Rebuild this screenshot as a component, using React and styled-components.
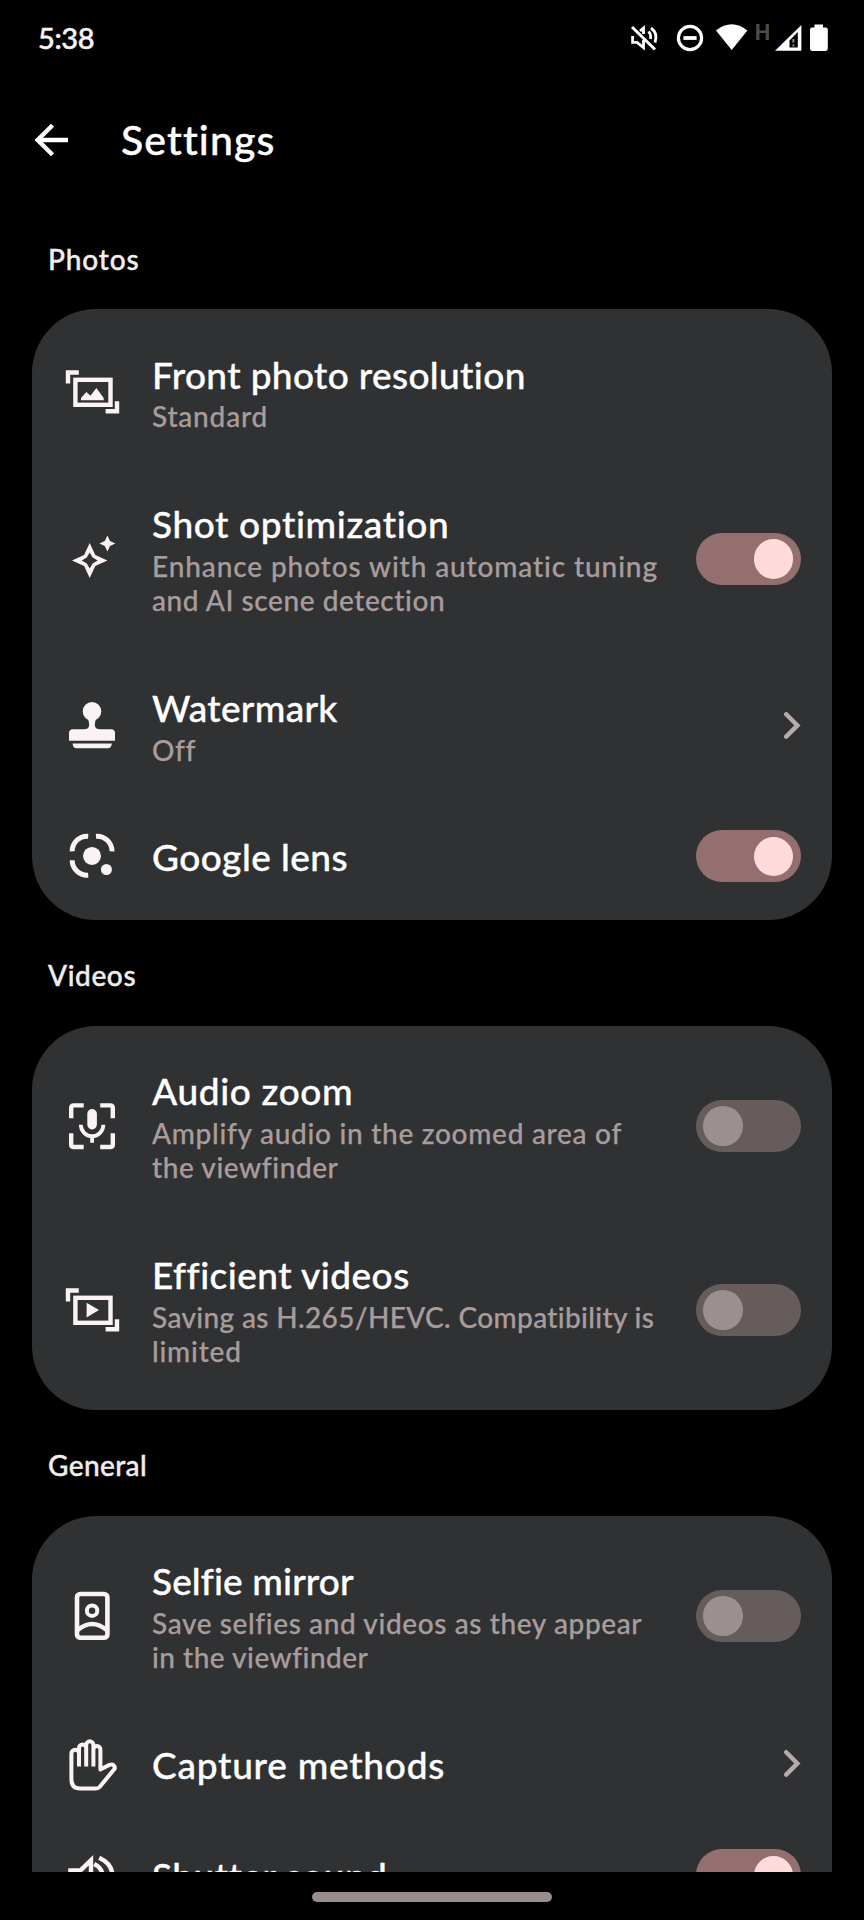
import React from 'react';
import styled, { createGlobalStyle } from 'styled-components';

const GlobalStyle = createGlobalStyle`
  * { box-sizing: border-box; }
  html, body { margin: 0; background: #000; }
  body {
    font-family: Lato, "Open Sans", sans-serif;
    font-variant-ligatures: none;
    color: #fff;
    overflow: hidden;
  }
`;

const Screen = styled.div`
  width: 864px;
  height: 1920px;
  display: flex;
  flex-direction: column;
  background: #000;
  overflow: hidden;
`;

const StatusBar = styled.header`
  flex: none;
  height: 76px;
  padding: 0 36px 0 38px;
  display: flex;
  align-items: center;
  justify-content: space-between;
`;

const Clock = styled.span`
  font-size: 29px;
  font-weight: 500;
  line-height: 36px;
  color: #f4f4f4;
  letter-spacing: -0.4px;
  -webkit-text-stroke: 0.5px currentColor;
`;

const StatusIcons = styled.div`
  display: flex;
  align-items: center;
  svg { display: block; }
`;

const Network = styled.span`
  width: 13px;
  margin: 0 5px 10px 0;
  font: 700 22px/22px Roboto, sans-serif;
  color: #4b4b4d;
  display: flex;
  justify-content: center;
`;

const AppBar = styled.div`
  flex: none;
  height: 127px;
  padding-left: 34px;
  display: flex;
  align-items: center;
  gap: 52px;
`;

const PageTitle = styled.h1`
  margin: 1px 0 0;
  font-size: 41px;
  font-weight: 500;
  line-height: 48px;
  letter-spacing: 1.1px;
  -webkit-text-stroke: 0.4px currentColor;
`;

const Scroller = styled.main`
  flex: none;
  height: 1669px;
  padding: 0 32px;
  overflow: hidden;
`;

const SectionTitle = styled.h2`
  margin: 0;
  height: 106px;
  padding: 38.5px 16px 0;
  font-size: 28px;
  font-weight: 500;
  line-height: 34px;
  color: #f2eded;
  letter-spacing: ${(p) => p.$track || 0}px;
  -webkit-text-stroke: 0.4px currentColor;
`;

const Card = styled.section`
  padding: 8px 0;
  border-radius: 64px;
  background: #303132;
`;

const Row = styled.div`
  display: flex;
  align-items: center;
  padding: ${(p) => (p.$compact ? 32 : 33.75)}px 31.5px ${(p) => (p.$compact ? 32 : 33.75)}px 32px;
`;

const IconSlot = styled.div`
  flex: none;
  width: 56px;
  height: 56px;
  margin: -10px 32px -10px 0;
  color: #fbf3f3;
  svg { display: block; }
`;

const Texts = styled.div`
  flex: 1;
  min-width: 0;
  padding-top: ${(p) => (p.$compact ? 1 : 0)}px;
  margin-bottom: ${(p) => (p.$compact ? -1 : 0)}px;
`;

const Title = styled.div`
  font-size: 37px;
  font-weight: 500;
  line-height: 47.5px;
  white-space: nowrap;
  letter-spacing: ${(p) => p.$track || 0}px;
  -webkit-text-stroke: 0.35px currentColor;
`;

const Summary = styled.div`
  font-size: 28px;
  font-weight: 500;
  line-height: 34.5px;
  white-space: nowrap;
  color: #a99c9c;
  letter-spacing: ${(p) => p.$track || 0}px;
  -webkit-text-stroke: 0.25px currentColor;
  padding-top: 1px;
  margin-bottom: -1px;
`;

const Track = styled.div`
  flex: none;
  width: 105px;
  height: 52px;
  margin: -2px 0 -3px;
  padding: 0 7.5px;
  border-radius: 26px;
  display: flex;
  align-items: center;
  justify-content: ${(p) => (p.$on ? 'flex-end' : 'flex-start')};
  background: ${(p) => (p.$on ? '#936f6f' : '#675c5c')};
`;

const Knob = styled.div`
  width: 39.5px;
  height: 39.5px;
  border-radius: 50%;
  background: ${(p) => (p.$on ? '#ffdcdb' : '#9b9090')};
`;

const NavBar = styled.footer`
  flex: 1;
  display: flex;
  justify-content: center;
  padding-top: 19.5px;
`;

const NavHandle = styled.div`
  width: 240px;
  height: 10px;
  border-radius: 5px;
  background: #978d8c;
`;

const Glyph = ({ children }) => (
  <svg width="56" height="56" viewBox="0 0 56 56" fill="none" stroke="currentColor" strokeWidth="4.4">
    {children}
  </svg>
);

const Frame = () => (
  <>
    <path d="M4 19.4V8.5H14.8M53 37.2V47.3H41.6" />
    <rect x="11.4" y="15.8" width="35.1" height="25" />
  </>
);

const icons = {
  photo: (
    <Glyph>
      <Frame />
      <path d="M17 36.3V34L22.4 28L26.4 31.8L32.4 24L39.7 34V36.3Z" fill="currentColor" stroke="none" />
    </Glyph>
  ),
  video: (
    <Glyph>
      <Frame />
      <path d="M22.6 20.8V35.4L35 28.1Z" fill="currentColor" stroke="none" />
    </Glyph>
  ),
  sparkle: (
    <Glyph>
      <path
        d="M25.7 12L31.3 23.9L43.4 29.5L31.3 35.1L25.7 47L20.1 35.1L8 29.5L20.1 23.9ZM25.7 21.6L22.8 26.6L17.8 29.5L22.8 32.4L25.7 37.4L28.6 32.4L33.6 29.5L28.6 26.6Z"
        fill="currentColor"
        fillRule="evenodd"
        stroke="none"
      />
      <path
        d="M43.4 4.6L46 9.9L51.3 12.5L46 15.1L43.4 20.4L40.8 15.1L35.5 12.5L40.8 9.9Z"
        fill="currentColor"
        stroke="none"
      />
    </Glyph>
  ),
  stamp: (
    <Glyph>
      <g fill="currentColor" stroke="none">
        <circle cx="28" cy="14.4" r="9.3" />
        <path d="M22.8 20Q25.4 24 25.2 28Q25 32.3 20 32.3H9Q5 32.3 5 36.3V43.7H51V36.3Q51 32.3 47 32.3H36Q31 32.3 30.8 28Q30.6 24 33.2 20Z" />
        <path d="M8.6 46.6H47.8Q47.4 51.3 44 51.3H12.4Q9 51.3 8.6 46.6Z" />
      </g>
    </Glyph>
  ),
  lens: (
    <Glyph>
      <path strokeWidth="5" d="M8.2 23.4A15 15 0 0 1 24.2 8.2M32 8.2A15 15 0 0 1 48 23.4M8.2 32.2A15 15 0 0 0 24.2 47.2" />
      <circle cx="28" cy="27.9" r="9" fill="currentColor" stroke="none" />
      <circle cx="42.4" cy="41.5" r="5.5" fill="currentColor" stroke="none" />
    </Glyph>
  ),
  mic: (
    <Glyph>
      <path d="M7.2 20.2V10Q7.2 7.4 9.8 7.4H19.7M36.2 7.4H46.2Q48.8 7.4 48.8 10V20.2M48.8 35.3V46.4Q48.8 49 46.2 49H36.2M19.7 49H9.8Q7.2 49 7.2 46.4V35.3" />
      <rect x="23.3" y="11" width="9.6" height="20.4" rx="4.8" fill="currentColor" stroke="none" />
      <path strokeWidth="3.8" d="M16.8 26.8a11.3 11.3 0 0 0 22.6 0M28.1 38V44.7" />
    </Glyph>
  ),
  selfie: (
    <Glyph>
      <rect x="13" y="6" width="30.4" height="43.8" rx="3.4" strokeWidth="4.6" />
      <circle cx="28.1" cy="22.7" r="5.2" strokeWidth="4" />
      <path d="M13.4 42.4Q28.1 29.6 43 42.4" />
    </Glyph>
  ),
  hand: (
    <Glyph>
      <path
        strokeLinejoin="round"
        strokeWidth="4"
        d="M15 31.5V18.5a3.8 3.8 0 0 0-7.6 0V44Q7.4 53.5 16 53.5H32Q34.2 53.5 35.6 52L50.8 33.6Q50.6 28.4 45.8 29.8L36.4 34.4V14.5a3.5 3.5 0 0 0-7 0V31.5M29.4 15V9.9a3.6 3.6 0 0 0-7.2 0V31.5M22.2 13a3.6 3.6 0 0 0-7.2 0V19"
      />
    </Glyph>
  ),
  sound: (
    <Glyph>
      <path d="M6.4 23.4H16.5L27 13.2V46L16.5 35.8H6.4Z" />
      <path d="M30.2 17Q38.6 21 38.6 29.6T31.6 41.4M35.2 10.8Q48.6 17 48.6 29.6T35.6 47.2" />
    </Glyph>
  ),
};

const Chevron = () => (
  <svg width="17" height="30" viewBox="0 -1 17 30" fill="none" stroke="#b6abab" strokeWidth="4.4" strokeLinecap="round">
    <path d="M2.2 3.2L13.4 14.4L2.2 25.6" />
  </svg>
);

const BackArrow = () => (
  <svg width="35" height="34" viewBox="0 0 35 34" fill="none" stroke="#fff" strokeWidth="4.4">
    <path d="M18.6 2.2L3.6 17L18.6 31.8M3.6 17H34" />
  </svg>
);

const Toggle = ({ on }) => (
  <Track $on={on}>
    <Knob $on={on} />
  </Track>
);

const sections = [
  {
    name: 'Photos',
    track: 0.85,
    rows: [
      { icon: 'photo', title: 'Front photo resolution', track: 0.37, lines: [['Standard', 0.8]] },
      {
        icon: 'sparkle',
        title: 'Shot optimization',
        track: 0.62,
        lines: [
          ['Enhance photos with automatic tuning', 0.89],
          ['and AI scene detection', 0.57],
        ],
        end: 'on',
      },
      { icon: 'stamp', title: 'Watermark', track: 0.34, lines: [['Off', 0.6]], end: 'more' },
      { icon: 'lens', title: 'Google lens', track: 0.45, end: 'on' },
    ],
  },
  {
    name: 'Videos',
    track: 0.6,
    rows: [
      {
        icon: 'mic',
        title: 'Audio zoom',
        track: 0.65,
        lines: [
          ['Amplify audio in the zoomed area of', 0.72],
          ['the viewfinder', 0.58],
        ],
        end: 'off',
      },
      {
        icon: 'video',
        title: 'Efficient videos',
        track: 0.48,
        lines: [
          ['Saving as H.265/HEVC. Compatibility is', 0.36],
          ['limited', 0.8],
        ],
        end: 'off',
      },
    ],
  },
  {
    name: 'General',
    track: 0.4,
    rows: [
      {
        icon: 'selfie',
        title: 'Selfie mirror',
        track: 0.12,
        lines: [
          ['Save selfies and videos as they appear', 0.61],
          ['in the viewfinder', 0.5],
        ],
        end: 'off',
      },
      { icon: 'hand', title: 'Capture methods', track: 0.76, end: 'more' },
      { icon: 'sound', title: 'Shutter sound', track: 0.5, end: 'on' },
    ],
  },
];

const SettingRow = ({ icon, title, track, lines = [], end }) => (
  <Row $compact={!lines.length}>
    <IconSlot>{icons[icon]}</IconSlot>
    <Texts $compact={!lines.length}>
      <Title $track={track}>{title}</Title>
      {lines.map(([text, spacing]) => (
        <Summary key={text} $track={spacing}>
          {text}
        </Summary>
      ))}
    </Texts>
    {end === 'more' && <Chevron />}
    {(end === 'on' || end === 'off') && <Toggle on={end === 'on'} />}
  </Row>
);

export default function App() {
  return (
    <Screen>
      <GlobalStyle />
      <StatusBar>
        <Clock>5:38</Clock>
        <StatusIcons>
          <svg width="126" height="32" viewBox="630 22 126 32" fill="none" stroke="#fff">
            <path d="M632.6 36V42.4H637L643.5 47.6V40M640 31L643.5 28V34" strokeWidth="2.8" />
            <path d="M648.5 31.5Q651.5 34.5 650.4 39M651 28Q658 33 655 42.6" strokeWidth="2.8" />
            <path d="M632 27L655 49.5" strokeWidth="3" />
            <circle cx="690" cy="38" r="11.6" strokeWidth="3.2" />
            <path d="M683.4 38H696.6" strokeWidth="3.8" />
            <path d="M716 30.5Q731.7 17.8 747.4 30.5L731.7 50Z" fill="#fff" stroke="none" />
          </svg>
          <Network>H</Network>
          <svg width="54" height="32" viewBox="774 22 54 32" fill="none">
            <path d="M775 50.7L801.4 25V50.7Z" fill="#fff" />
            <path d="M789.5 40.4L797.8 32V47.6H789.5Z" fill="#000" />
            <path d="M793.4 39V42.6M793.4 44.4V46.4" stroke="#999" strokeWidth="1.8" />
            <path d="M814.5 24.6H823V27.4H825.6Q827.8 27.4 827.8 29.6V48.6Q827.8 50.9 825.6 50.9H812.2Q810 50.9 810 48.6V29.6Q810 27.4 812.2 27.4H814.5Z" fill="#fff" />
          </svg>
        </StatusIcons>
      </StatusBar>
      <AppBar>
        <BackArrow />
        <PageTitle>Settings</PageTitle>
      </AppBar>
      <Scroller>
        {sections.map((section) => (
          <React.Fragment key={section.name}>
            <SectionTitle $track={section.track}>{section.name}</SectionTitle>
            <Card>
              {section.rows.map((row) => (
                <SettingRow key={row.title} {...row} />
              ))}
            </Card>
          </React.Fragment>
        ))}
      </Scroller>
      <NavBar>
        <NavHandle />
      </NavBar>
    </Screen>
  );
}
